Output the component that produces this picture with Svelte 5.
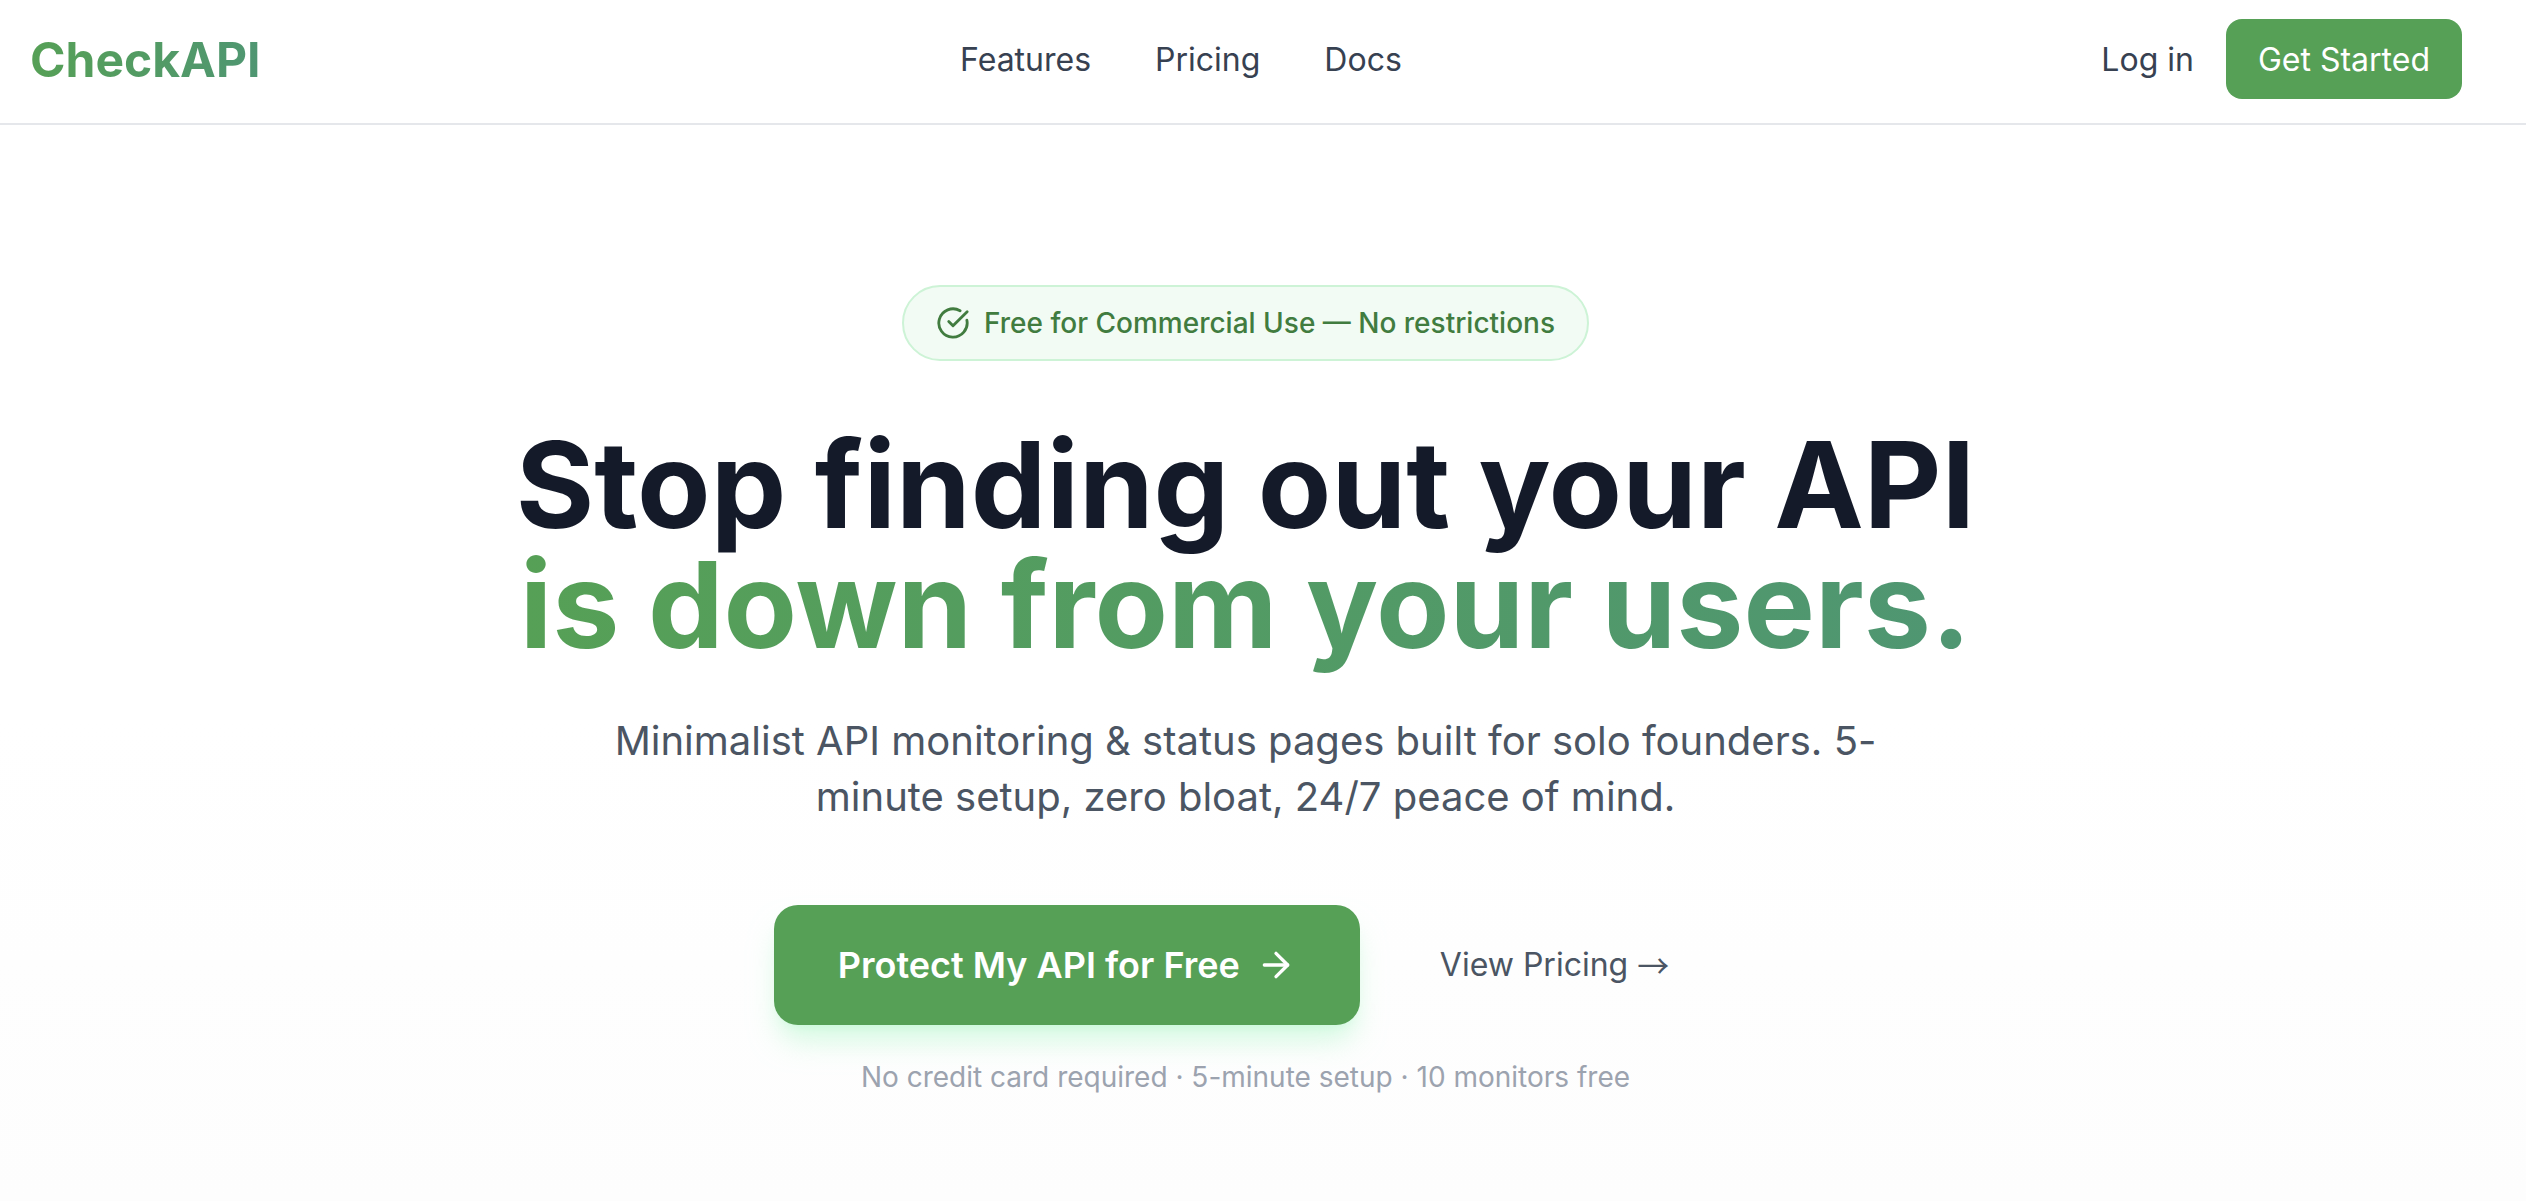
<script>
  const links = ['Features', 'Pricing', 'Docs'];
</script>

<div class="page">
  <header class="nav">
    <a class="logo" href="#top">CheckAPI</a>
    <nav class="links">
      {#each links as l}<a href="#top">{l}</a>{/each}
    </nav>
    <div class="actions">
      <a class="login" href="#top">Log in</a>
      <a class="start" href="#top">Get Started</a>
    </div>
  </header>
  <main class="hero">
    <div class="badge">
      <svg width="34" height="34" viewBox="0 0 24 24" fill="none" stroke="currentColor" stroke-width="2" stroke-linecap="round" stroke-linejoin="round"><path d="M21.8 10A10 10 0 1 1 17 3.33"/><path d="m9 11 3 3L22 4"/></svg>
      <span>Free for Commercial Use — No restrictions</span>
    </div>
    <h1>Stop finding out your API<br /><span class="grad">is down from your users.</span></h1>
    <p class="sub">Minimalist API monitoring &amp; status pages built for solo founders. 5-minute setup, zero bloat, 24/7 peace of mind.</p>
    <div class="cta">
      <a class="primary" href="#top">Protect My API for Free
        <svg width="40" height="40" viewBox="0 0 24 24" fill="none" stroke="currentColor" stroke-width="2" stroke-linecap="round" stroke-linejoin="round"><path d="M5 12h14"/><path d="m12 5 7 7-7 7"/></svg>
      </a>
      <a class="secondary" href="#top">View Pricing <span class="arrow">→</span></a>
    </div>
    <p class="note">No credit card required · 5-minute setup · 10 monitors free</p>
  </main>
</div>

<style>
  :global(body) { margin: 0; background: #fff; }
  .page {
    height: 1201px; overflow: hidden;
    font-family: Inter, "Noto Sans", sans-serif;
    background: linear-gradient(#fff 60%, #fdfdfd);
  }
  a { text-decoration: none; color: inherit; }
  .nav {
    height: 125px; box-sizing: border-box; border-bottom: 2px solid #e5e7eb;
    background: #fff;
    display: flex; justify-content: space-between; align-items: center;
    padding: 0 64px 5px 30px;
  }
  .logo {
    font-size: 48px; font-weight: 700; width: max-content;
    background: linear-gradient(90deg, #56a056, #4f9672);
    -webkit-background-clip: text; background-clip: text; color: transparent;
  }
  .links { display: flex; gap: 64px; font-size: 32px; color: #374151; }
  .actions { display: flex; justify-content: flex-end; align-items: center; gap: 32px; font-size: 32px; }
  .login { color: #374151; }
  .start { background: #56a056; color: #fff; padding: 0 32px; height: 80px; display: flex; align-items: center; border-radius: 16px; }
  .hero { display: flex; flex-direction: column; align-items: center; padding: 160px 65px 0 30px; }
  .badge {
    display: flex; align-items: center; gap: 14px; height: 76px; box-sizing: border-box;
    padding: 0 32px; border: 2px solid #cdf3d6; border-radius: 999px;
    background: #f2fbf4; color: #417c3f; font-size: 28px; font-weight: 500;
  }
  h1 {
    margin: 64px 0 0; font-size: 120px; line-height: 120px; font-weight: 700;
    color: #141a29; text-align: center;
  }
  .grad {
    background: linear-gradient(90deg, #56a056, #4f9672);
    -webkit-background-clip: text; background-clip: text; color: transparent;
  }
  .sub {
    margin: 48px 0 0; width: 1280px; text-align: center; font-size: 40px; line-height: 56px; color: #4b5563;
  }
  .cta { display: flex; align-items: center; gap: 32px; margin-top: 80px; }
  .primary {
    display: flex; align-items: center; gap: 16px; height: 120px; padding: 0 64px; box-sizing: border-box;
    background: #56a056; color: #fff; border-radius: 24px; font-size: 36px; font-weight: 600;
    box-shadow: 0 20px 30px -6px #bbf7d0aa, 0 8px 12px -8px #bbf7d0aa;
  }
  .secondary { padding: 0 48px; font-size: 32px; line-height: 40px; font-weight: 400; color: #4b5563; display: flex; align-items: center; gap: 9px; }
  .arrow { font-family: "Noto Sans CJK SC", sans-serif; line-height: 40px; padding-bottom: 2px; }
  .note { margin: 35px 0 0; font-size: 28px; color: #9ca3af; }
</style>
